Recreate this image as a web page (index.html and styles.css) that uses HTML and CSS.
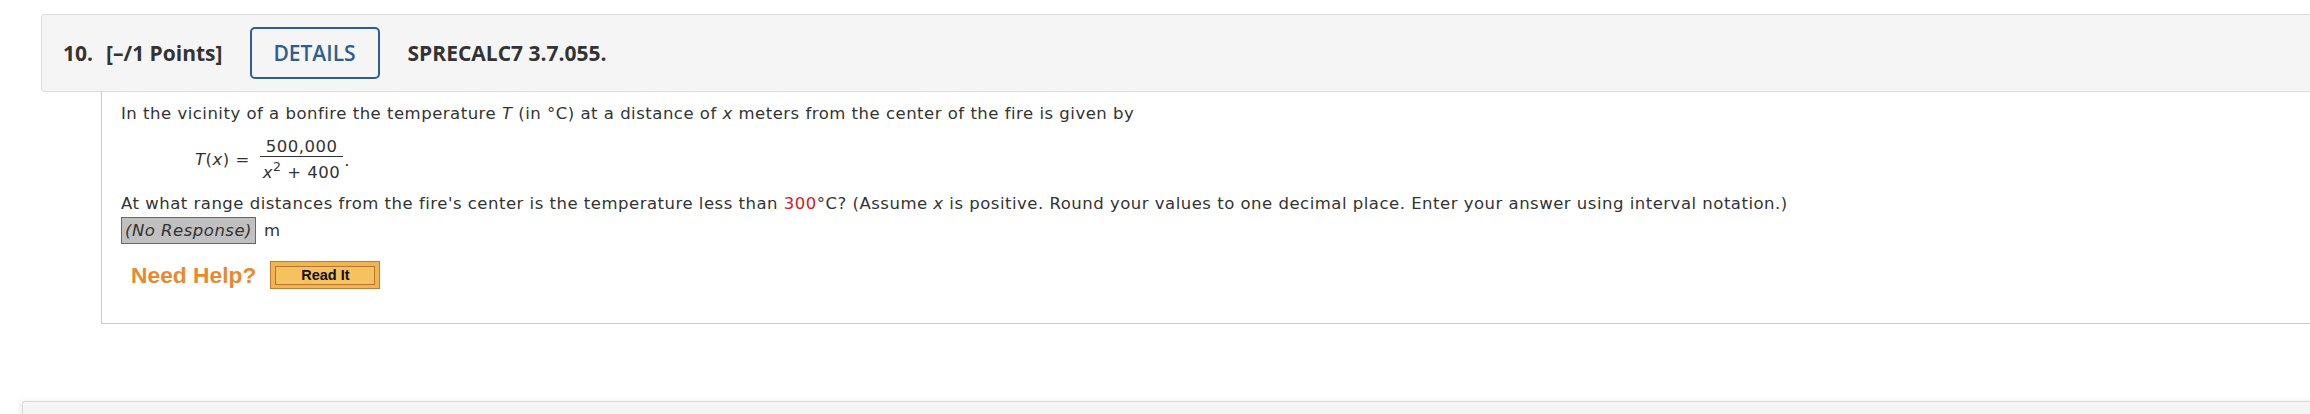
FILE: index.html
```html
<!DOCTYPE html>
<html>
<head>
<meta charset="utf-8">
<link rel="stylesheet" href="styles.css">
</head>
<body>
<div class="page">
  <div class="q-header">
    <span class="q-num">10.</span>
    <span class="q-points">[–/1 Points]</span>
    <button class="details-btn">DETAILS</button>
    <span class="q-ref">SPRECALC7 3.7.055.</span>
  </div>
  <div class="q-body">
    <p class="line first">In the vicinity of a bonfire the temperature <i>T</i> (in °C) at a distance of <i>x</i> meters from the center of the fire is given by</p>
    <div class="formula">
      <span class="lhs"><i>T</i>(<i>x</i>) =</span>
      <span class="frac">
        <span class="num">500,000</span>
        <span class="den"><i>x</i><sup>2</sup> + 400</span>
      </span>
      <span class="dot">.</span>
    </div>
    <p class="line">At what range distances from the fire's center is the temperature less than <span class="red">300</span>°C? (Assume <i>x</i> is positive. Round your values to one decimal place. Enter your answer using interval notation.)</p>
    <div class="answer-row"><span class="no-resp">(No Response)</span><span class="unit">m</span></div>
    <div class="help-row">
      <span class="need-help">Need Help?</span>
      <span class="read-it"><span class="read-it-inner">Read It</span></span>
    </div>
  </div>
  <div class="next-card"></div>
</div>
</body>
</html>
```

FILE: styles.css
```css
html, body {
  margin: 0;
  padding: 0;
  background: #fff;
  overflow: hidden;
}
.page {
  width: 2310px;
  height: 414px;
  padding-top: 14px;
  box-sizing: border-box;
  overflow: hidden;
}
.q-header {
  margin-left: 41px;
  margin-right: -10px;
  height: 78px;
  box-sizing: border-box;
  background: #f5f5f5;
  border: 1px solid #dcdcdc;
  border-radius: 3px;
  display: flex;
  align-items: center;
  padding-left: 21px;
  font-family: "Open Sans", sans-serif;
  font-weight: 700;
  font-size: 21px;
  color: #333;
}
.q-num {
  margin-right: 13px;
}
.details-btn {
  margin-left: 27px;
  width: 130px;
  height: 52px;
  border: 2px solid #2c5f91;
  border-radius: 5px;
  background: transparent;
  color: #2c5f91;
  font-family: "Open Sans", sans-serif;
  font-weight: 600;
  font-size: 21px;
  padding: 0;
}
.q-ref {
  margin-left: 28px;
}
.q-body {
  margin-left: 101px;
  margin-right: -10px;
  height: 232px;
  box-sizing: border-box;
  border-left: 1px solid #cccccc;
  border-bottom: 1px solid #cccccc;
  padding: 10px 0 0 19px;
  font-family: "DejaVu Sans", Verdana, sans-serif;
  font-size: 16.5px;
  letter-spacing: 0.5px;
  color: #333;
}
.line {
  margin: 0;
  line-height: 24px;
}
.formula {
  display: flex;
  align-items: center;
  margin: 11px 0 9px 74px;
}
.lhs {
  margin-right: 10px;
  line-height: 20px;
}
.frac {
  display: inline-flex;
  flex-direction: column;
  align-items: stretch;
}
.num {
  line-height: 19px;
  text-align: center;
  border-bottom: 1px solid #333;
}
.den {
  line-height: 20px;
  padding: 6px 3px 0;
  text-align: center;
}
.den sup {
  font-size: 12.5px;
  line-height: 0;
  vertical-align: 7px;
}
.dot {
  align-self: flex-start;
  margin-top: 14px;
  margin-left: 1px;
}
.red {
  color: #d42020;
}
.answer-row {
  display: flex;
  align-items: center;
  margin-top: 1px;
}
.no-resp {
  display: inline-block;
  height: 27px;
  box-sizing: border-box;
  border: 1px solid #666;
  background: #c0c0c0;
  font-style: italic;
  line-height: 24px;
  padding: 1px 3px 0 3px;
}
.unit {
  margin-left: 8px;
}
.help-row {
  display: flex;
  align-items: center;
  height: 28px;
  margin-top: 17px;
  margin-left: 10px;
}
.need-help {
  font-family: "Liberation Sans", Arial, sans-serif;
  font-weight: 700;
  font-size: 22.8px;
  letter-spacing: 0;
  color: #e8892f;
}
.read-it {
  margin-left: 14px;
  display: inline-block;
  width: 110px;
  height: 28px;
  box-sizing: border-box;
  border: 1px solid #c47b2e;
  background: #f0b553;
  padding: 4px 4px 3px;
}
.read-it-inner {
  display: block;
  height: 19px;
  box-sizing: border-box;
  border: 1px solid #b8772d;
  background: #f5c25f;
  text-align: center;
  font-family: "Liberation Sans", Arial, sans-serif;
  font-weight: 700;
  font-size: 14.5px;
  letter-spacing: 0;
  line-height: 17px;
  color: #111;
}
.next-card {
  margin-top: 77px;
  margin-left: 22px;
  margin-right: -10px;
  height: 40px;
  background: #f5f5f5;
  border-top: 1px solid #dcdcdc;
  border-left: 1px solid #dcdcdc;
  border-radius: 3px 0 0 0;
  box-shadow: -2px 0 6px rgba(0,0,0,0.08);
}
```
